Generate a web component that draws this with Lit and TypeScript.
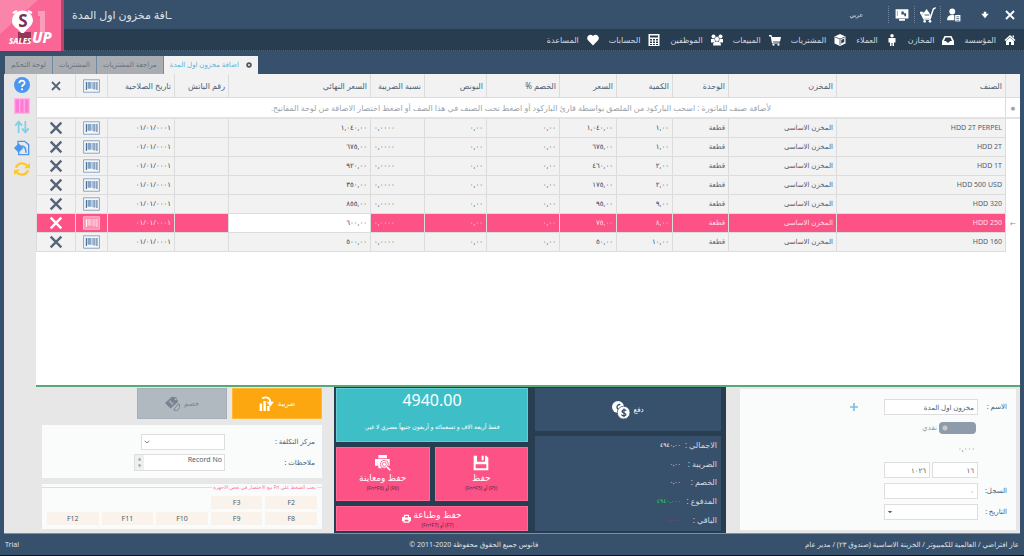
import { LitElement, html, css, svg } from "lit";
import { customElement } from "lit/decorators.js";
import { classMap } from "lit/directives/class-map.js";

const ICONS: Record<string, unknown> = {
  close: svg`<path d="M4 4L20 20M20 4L4 20" fill="none" stroke="currentColor" stroke-width="3.600"/>`,
  down: svg`<path d="M9 4h6v5h6l-9 11L3 9h6z"/>`,
  user: svg`<circle cx="9" cy="6" r="5"/><path d="M0 21c0-6 3-9 9-9 2 0 4 .4 5 1v8z"/><path d="M12.500 11h11v13h-11z" fill="#37506b"/><path d="M14 12h9v11h-9z"/><path d="M16 15h5M16 18h5M16 21h5" stroke="#37506b" stroke-width="1.200"/>`,
  basket: svg`<path d="M23.500 1L20 3l-5 15H6L1 8" fill="none" stroke="currentColor" stroke-width="2.200"/><path d="M3 12l7-9 6 9-1 5H6zM0 7h5v3H0z"/><path d="M7 12h7" stroke="#37506b" stroke-width="1.400"/><circle cx="7" cy="21.500" r="2"/><circle cx="15" cy="21.500" r="2"/>`,
  screen: svg`<path d="M1 2h22v16H1zM7 19h10v3H7z"/><path d="M11 6h4v3h4v5h-3v-3h-5z" fill="#37506b"/><path d="M4 5v9" stroke="#8fa0b2" stroke-width="1.500"/>`,
  home: svg`<path d="M12 2l11 10-2 2-9-8-9 8-2-2zM17 3h3v5l-3-3zM4 14l8-7 8 7v8h-6v-6h-4v6H4z"/>`,
  tray: svg`<path fill-rule="evenodd" d="M5 4h14l5 10v8H0v-8zM7 7l-3 7h4l2 3h4l2-3h4l-3-7z"/>`,
  man: svg`<circle cx="12" cy="3.500" r="3.500"/><path d="M5 8h14v9h-3v7h-3v-6h-2v6H8v-7H5z"/>`,
  cube: svg`<path d="M12 0l11 5v14l-11 5-11-5V5z"/><path d="M2 6l10 4 10-4M12 10v12" fill="none" stroke="#293d50" stroke-width="1.500"/><path d="M14.500 12l6-3v7l-6 3z" fill="#293d50"/>`,
  cart: svg`<path d="M0 2h5l1 4h18l-2 9H8l.5 2H21v2H6L3.500 5H0z"/><circle cx="9" cy="21.500" r="2.200"/><circle cx="19" cy="21.500" r="2.200"/>`,
  group: svg`<circle cx="5" cy="5" r="4"/><circle cx="19" cy="5" r="4"/><path d="M0 10h8v7H0zM16 10h8v7h-8z"/><circle cx="12" cy="10" r="5" stroke="#293d50"/><path d="M4 23c0-6 3-8 8-8s8 2 8 8z"/>`,
  calc: svg`<path d="M1 0h22v24H1z"/><path d="M4 3h16v4H4zM4 10h4v3H4zm6 0h4v3h-4zm6 0h4v3h-4zM4 15h4v3H4zm6 0h4v3h-4zm6 0h4v3h-4zM4 20h4v2H4zm6 0h4v2h-4zm6 0h4v2h-4z" fill="#293d50"/>`,
  heart: svg`<path d="M12 23L1.500 12C-3 4 7-2 12 4c5-6 15 0 10.500 8z"/>`,
  help: svg`<circle cx="12" cy="12" r="12"/><path d="M8 9.500c0-5.500 8-5.500 8-.5 0 3-4 2.500-4 6" fill="none" stroke="#fff" stroke-width="2.600"/><circle cx="12" cy="18.500" r="1.600" fill="#fff"/>`,
  columns: svg`<path d="M0 0h24v24H0z" fill="#ffb3e6"/><path d="M2 2h20v20H2z"/><path d="M8.700 2v20M15.300 2v20" stroke="#ffc4ec" stroke-width="1.400"/>`,
  sort: svg`<path d="M7 21V5M2 10l5-6 5 6M17 3v16M12 14l5 6 5-6" fill="none" stroke="currentColor" stroke-width="2.600"/>`,
  doc: svg`<path d="M6 7V2h10l6 5v15H7v-4" fill="none" stroke="currentColor" stroke-width="2"/><path d="M7 5l7 7-7 7-7-7z"/><path d="M11 9c5 0 7 3 7 10" fill="none" stroke="currentColor" stroke-width="2.400"/>`,
  refresh: svg`<path d="M3 10c2-7 12-9 17-3M21 14c-2 7-12 9-17 3" fill="none" stroke="currentColor" stroke-width="3.400"/><path d="M24 3v8h-9zM0 21v-8h9z"/>`,
  barcode: svg`<path d="M1 1h28v22H1z" fill="#fff" fill-opacity=".35" stroke="currentColor" stroke-width="1.700"/><path d="M5 5h2v14H5z" class="bar"/><path d="M8 5h6v12H8zM15 5h2v12h-2zM18 5h4v13h-4zM23 5h3v14h-3z"/>`,
  tax: svg`<path d="M1 12h4v12H1zM7 8h4v16H7zM13 16h4v8h-4z"/><path d="M5 4c7-4 13-1 13 6" fill="none" stroke="currentColor" stroke-width="3"/><path d="M12 9h12l-6 8z"/>`,
  tags: svg`<path d="M0 11L11 1l7 1 3 7L9 20z"/><path d="M14 22L22 12l2 6-5 6z" fill="none" stroke="currentColor" stroke-width="1.500"/><circle cx="17" cy="5" r="1.600" fill="#b0b8c0"/><path d="M6 10c3-3 4 5 8 1M8 7l4 8" fill="none" stroke="#b0b8c0" stroke-width="1.500"/>`,
  coins: svg`<circle cx="8" cy="8" r="8"/><path d="M11 5c-5-2-6 7-1 6" fill="none" stroke="#37506b" stroke-width="1.800"/><circle cx="15.500" cy="15.500" r="8.500" stroke="#37506b"/><path d="M19 13c-1-2-6-1.500-5.500 1s5 1.500 5 4-5 2-6 0M16 10v11.500" fill="none" stroke="#37506b" stroke-width="1.700"/>`,
  save: svg`<path fill-rule="evenodd" d="M1 1h19l3 3v19H1zM4 14v6h16v-6zM6 1v9h12V1z"/><path d="M13 1h3v7h-3z"/>`,
  preview: svg`<path d="M5 0h13v5H5zM0 6h22v10h-4V9H4v7H0zM5 11h6v9H5z"/><path d="M4 6h15v10H4z"/><circle cx="14" cy="14" r="6" stroke="#fc5286" stroke-width="1.300"/><circle cx="14" cy="14" r="3" fill="none" stroke="#fc5286" stroke-width="1.200"/><path d="M18 18l5 5" stroke="currentColor" stroke-width="2.500"/>`,
  printer: svg`<path fill-rule="evenodd" d="M5 2h14v6h5v11h-4v4H4v-4H0V8h5zM8 5v4h8V5zM7 15v5h10v-5z"/>`,
  plus: svg`<path d="M9.500 0h5v9.500H24v5h-9.500V24h-5v-9.500H0v-5h9.500z"/>`,
  gear: svg`<circle cx="12" cy="12" r="11"/><circle cx="12" cy="12" r="4" fill="#f2f2f2"/>`,
  chevron: svg`<path d="M3 7l9 9 9-9" fill="none" stroke="currentColor" stroke-width="3"/>`,
  caret: svg`<path d="M3 8h18l-9 9z"/>`,
};

const BOXES: Record<string, string> = { barcode: "0 0 30 24" };

const icon = (name: string) =>
  html`<svg class="icon i-${name}" viewBox=${BOXES[name] ?? "0 0 24 24"} aria-hidden="true">${ICONS[name]}</svg>`;

const NAV = [
  ["home", "المؤسسة"], ["tray", "المخازن"], ["man", "العملاء"], ["cube", "المشتريات"], ["cart", "المبيعات"],
  ["group", "الموظفين"], ["calc", "الحسابات"], ["heart", "المساعدة"],
];

const WIDTHS = [15, 169, 108, 56, 56, 57, 73, 62, 54, 142, 54, 67, 32, 39];
const HEADS = ["الصنف", "المخزن", "الوحدة", "الكمية", "السعر", "الخصم %", "البونص", "نسبة الضريبة", "السعر النهائي", "رقم الباتش", "تاريخ الصلاحية"];

const ROWS = [
  ["HDD 2T PERPEL", "١,٠٠", "١,٠٤٠,٠٠", "١,٠٤٠,٠٠"],
  ["HDD 2T", "١,٠٠", "٦٧٥,٠٠", "٦٧٥,٠٠"],
  ["HDD 1T", "٢,٠٠", "٤٦٠,٠٠", "٩٢٠,٠٠"],
  ["HDD 500 USD", "٢,٠٠", "١٧٥,٠٠", "٣٥٠,٠٠"],
  ["HDD 320", "٩,٠٠", "٩٥,٠٠", "٨٥٥,٠٠"],
  ["HDD 250", "٨,٠٠", "٧٥,٠٠", "٦٠٠,٠٠"],
  ["HDD 160", "١٠,٠٠", "٥٠,٠٠", "٥٠٠,٠٠"],
];
const SELECTED = 5;

const TOTALS = [
  ["الاجمالي :", "٤٩٤٠,٠٠", ""], ["الضريبة :", "٠,٠٠", ""], ["الخصم :", "٠,٠٠", ""],
  ["المدفوع :", "٤٩٤٠,٠٠٠", "paid"], ["الباقي :", "٠,٠٠٠", "rest"],
];

@customElement("app-root")
export class AppRoot extends LitElement {
  static styles = css`
    :host { display: flex; flex-direction: column; min-height: 100vh; box-sizing: border-box; direction: rtl; background: #37506b; color: #4d5f73; font: 7px/10px "Noto Sans", "DejaVu Sans", sans-serif; border-bottom: 1px solid #10161d; }
    * { box-sizing: border-box; }
    button, input, select, textarea { font: inherit; color: inherit; border: 0; border-radius: 0; margin: 0; padding: 0; background: none; }
    a { color: inherit; text-decoration: none; }
    .icon { display: block; width: 12px; height: 12px; fill: currentColor; flex: none; }
    .top { display: flex; height: 51px; color: #fff; }
    .bars { flex: 1; min-width: 0; display: flex; flex-direction: column; }
    .logo { width: 64px; height: 51px; flex: none; display: block; }
    .title { height: 29px; display: flex; align-items: center; padding: 0 8px; }
    .title h1 { margin: 0; margin-inline-start: auto; font-size: 11px; line-height: 16px; font-weight: 400; color: #dfe5ea; }
    .tool { height: 17px; display: flex; align-items: center; justify-content: center; width: 26px; }
    .tool.end { width: 12px; }
    .tool.mini { width: 38px; }
    .tool.line { border-inline-end: 1px dotted #75869a; }
    .tool .icon { width: 14px; height: 14px; }
    .tool .i-basket { width: 16px; height: 16px; }
    .tool .i-close { width: 12px; height: 12px; }
    .tool .i-down { width: 10px; height: 10px; }
    .lang { margin-inline-start: 25px; font-size: 6px; color: #dfe5ea; }
    .nav { flex: 1; background: #293d50; border-bottom: 1px dotted #4a6076; display: flex; align-items: center; padding: 0 8px; gap: 10px; font-size: 8px; }
    .nav a { display: flex; align-items: center; gap: 8px; white-space: nowrap; color: #d3dae0; }
    .nav .icon { color: #fff; }
    .tabs { display: flex; direction: ltr; align-items: flex-end; padding: 5px 5px 0; }
    .tab { height: 18px; padding: 0 6px; background: #a9adb1; color: #64727f; border-inline-end: 1px solid #718aa4; display: flex; align-items: center; justify-content: center; white-space: nowrap; }
    .tab.on { background: #f2f2f2; color: #59b4d8; gap: 7px; border: 0; }
    .tab .icon { width: 6px; height: 6px; color: #4d5661; }
    .main { flex: 1; display: flex; direction: ltr; margin: 0 4px; background: #e7e7e7; min-height: 0; border-bottom: 1px solid #8a8d90; }
    .side { width: 32px; flex: none; display: flex; flex-direction: column; align-items: center; gap: 5px; padding: 3px 0 0 3px; }
    .side button { display: block; }
    .side .icon { width: 16px; height: 16px; }
    .blue { color: #4a96f0; } .pink { color: #ff7ad5; } .sky { color: #7fd0e5; } .gold { color: #fbc92b; }
    .wrap { flex: 1; min-width: 0; display: flex; flex-direction: column; }
    .sheet { flex: 1; background: #fff; direction: rtl; border-bottom: 2px solid #5aa877; }
    table { width: 100%; table-layout: fixed; border-collapse: separate; border-spacing: 0; }
    th, td { height: 19px; padding: 0 3px; border-left: 1px solid #dcdcdc; border-bottom: 1px solid #dcdcdc; background: #f2f2f2; font-weight: 400; text-align: right; white-space: nowrap; overflow: hidden; }
    th { height: 24px; font-size: 8px; }
    .hint td { height: 21px; background: #fff; text-align: center; color: #9ba4ac; border-bottom: 2px solid #e3e3e3; font-size: 8px; }
    .num { color: #33475c; }
    .left { text-align: left; }
    .mark { background: #fff; padding: 0; text-align: center; border-bottom: 0; }
    .hint .mark { font-size: 5px; }
    .mid { text-align: center; }
    .mid .icon { margin: 0 auto; }
    .mid button { display: inline-block; vertical-align: middle; }
    .mid .i-close { width: 16px; height: 16px; color: #56657a; }
    .mid .i-barcode { width: 17px; height: 14px; color: #87a3c4; }
    .bar { fill: #3f6f9c; }
    th.mid .i-close { width: 12px; height: 12px; }
    .sel td { background: #fc5286; color: #ffe0ea; }
    .sel td.mark { background: #fff; color: #fc5286; }
    .sel .mid .i-close { color: #fff; }
    .sel .mid .i-barcode { color: #ffc1d3; }
    .sel .bar { fill: #fff; }
    .sel td.edit { background: #fff; color: #33475c; }
    .deck { display: grid; grid-template-columns: minmax(0, 298fr) minmax(0, 392fr) minmax(0, 294fr); height: 146px; direction: ltr; }
    .extras { padding: 1px 12px 4px 6px; display: flex; flex-direction: column; gap: 6px; }
    .duo { display: flex; justify-content: flex-end; gap: 5px; direction: ltr; }
    .big { width: 90px; height: 31px; display: flex; direction: rtl; align-items: center; justify-content: center; gap: 4px; background: #fca70f; color: #fff; border: 1px solid #ffb938; }
    .big .icon { width: 15px; height: 15px; }
    .big.off { background: #b0b8c0; border-color: #a6afb8; color: #77838f; }
    .card { background: #fafcfb; direction: rtl; }
    .notes { height: 53px; padding: 9px 7px; display: grid; grid-template-columns: 90px 84px; gap: 4px 0; align-items: center; }
    .box { background: #fff; border: 1px solid #dedede; height: 16px; padding: 0 3px; width: 100%; min-width: 0; }
    .pick { position: relative; display: block; }
    .pick .box { appearance: none; display: block; }
    .pick .icon { position: absolute; left: 3px; top: 5px; width: 6px; height: 6px; }
    .memo { display: flex; direction: ltr; width: 91px; height: 17px; border: 1px solid #dedede; background: #fff; }
    .spin { width: 9px; background: #efefef; color: #9a9a9a; font-size: 4px; line-height: 7px; text-align: center; }
    .memo textarea { flex: 1; min-width: 0; resize: none; overflow: hidden; text-align: right; direction: ltr; padding: 0 2px; }
    .fn { flex: 1; min-height: 0; }
    fieldset { margin: 0; border: 0; border-top: 1px solid #dedede; min-width: 0; padding: 6px 5px 0; }
    legend { font-size: 5px; line-height: 6px; color: #fb76a0; padding: 0 1px; }
    .keys { display: grid; direction: rtl; grid-template-columns: repeat(5, 1fr); gap: 3px; }
    .keys button { background: #f9f3ec; height: 13px; line-height: 13px; }
    .gap { grid-column: span 3; }
    .pay { background: #293d50; padding: 1px 5px 2px 2px; display: grid; grid-template-columns: 192px 1fr; gap: 7px; direction: ltr; color: #fff; }
    .stack { display: flex; flex-direction: column; gap: 5px; }
    .total { background: #3ebfc8; border: 1px solid #66cbd2; height: 54px; text-align: center; direction: rtl; }
    .total output { display: block; font-size: 16px; line-height: 22px; }
    .total p { margin: 11px 0 0; font-size: 6px; }
    .row { display: flex; gap: 5px; height: 54px; direction: ltr; }
    .act { flex: 1; background: #fc5286; border: 1px solid #fd6b97; display: flex; flex-direction: column; align-items: center; justify-content: center; direction: rtl; font-size: 9px; line-height: 13px; }
    .act small { display: block; font-size: 5px; line-height: 9px; color: #5c2a43; }
    .act .icon { width: 16px; height: 16px; }
    .act.wide { flex: none; height: 25px; flex-direction: row; gap: 2px; }
    .act.wide .icon { width: 9px; height: 9px; }
    .cash { height: 43px; background: #37506b; display: flex; direction: rtl; align-items: center; justify-content: center; gap: 3px; }
    .cash .icon { width: 18px; height: 18px; }
    .sum { flex: 1; margin: 0; background: #37506b; direction: rtl; padding: 0 4px 2px; display: grid; grid-template-columns: 36px auto; align-content: space-around; font-size: 8px; line-height: 12px; justify-content: start; }
    dt, dd { margin: 0; white-space: nowrap; }
    dt { color: #d3dae0; }
    dd { font-size: 6px; }
    .paid { color: #2fd058; } .rest { color: #f0324a; }
    .info { padding: 2px 4px 3px 14px; display: flex; }
    .form { flex: 1; padding: 10px 9px 8px; display: grid; grid-template-columns: 29px 94px auto; grid-auto-rows: 16px; gap: 5px 0; align-items: center; justify-content: start; align-content: start; }
    .form label[for] { grid-column: 1; }
    .form .i-plus { width: 8px; height: 8px; color: #7bbfdd; margin-inline-start: 26px; }
    .form .switch { display: flex; align-items: center; gap: 2px; grid-column: 2; color: #8a97a4; padding-inline-start: 2px; }
    .switch input { appearance: none; width: 37px; height: 12px; border-radius: 4px; background: radial-gradient(circle at 6px 6px, #c8c8c8 2px, #8d9baa 3px); }
    .c2 { grid-column: 2; padding: 0 3px; }
    .pair { display: flex; gap: 2px; grid-column: 2; }
    .foot { height: 21px; color: #dfe5ea; padding: 0 5px; display: grid; grid-template-columns: 478fr auto 402fr; align-items: center; white-space: nowrap; }
    .foot span:last-child { text-align: left; }
  `;

  private row(r: string[], i: number) {
    return html`<tr class=${classMap({ sel: i === SELECTED })}>
      <td class="mark">${i === SELECTED ? "←" : ""}</td>
      <td dir="ltr">${r[0]}</td><td>المخزن الاساسى</td><td>قطعة</td>
      <td class="num">${r[1]}</td><td class="num">${r[2]}</td><td class="num">٠,٠٠</td><td class="num">٠,٠٠</td>
      <td class="num left">٠,٠٠٠٠</td><td class="num edit">${r[3]}</td><td></td><td class="num">٠١/٠١/٠٠٠١</td>
      <td class="mid"><button aria-label="باركود">${icon("barcode")}</button></td>
      <td class="mid"><button aria-label="حذف">${icon("close")}</button></td>
    </tr>`;
  }

  render() {
    return html`
      <header class="top">
        <div class="bars">
          <div class="title">
            <button class="tool end" aria-label="إغلاق">${icon("close")}</button>
            <button class="tool mini" aria-label="تصغير">${icon("down")}</button>
            <button class="tool line" aria-label="المستخدم">${icon("user")}</button>
            <button class="tool line" aria-label="السلة">${icon("basket")}</button>
            <button class="tool line" aria-label="الشاشة">${icon("screen")}</button>
            <a class="lang" href="#">عربي</a>
            <h1>ـافة مخزون اول المدة</h1>
          </div>
          <nav class="nav">${NAV.map(([n, t]) => html`<a href="#">${icon(n)}<span>${t}</span></a>`)}</nav>
        </div>
        <svg class="logo" viewBox="0 0 64 51" role="img" aria-label="Sales Up">
          <path d="M0 0h64v51H0z" fill="#fa6797"/><path d="M0 0h38L0 34z" fill="#fb84aa"/><path d="M61 0h3v51h-3z" fill="#b3456f"/>
          <path d="M38 11h7v22h-5V16h-2z" fill="#fb9dba"/><path d="M18 32h13v11H18z" fill="#9c3359"/>
          <path d="M12 21a10.500 10 0 0 1 21-1c0 6-6 8-9 13h-3c-3-5-9-6-9-12z" fill="#fff"/><path d="M13 13l4-2M32 13l-4-2" stroke="#fff" stroke-width="2"/>
          <text x="23" y="27" text-anchor="middle" font-size="17" font-weight="700" fill="#7d2f54" font-family="Noto Sans">S</text>
          <text x="9" y="44" font-size="8" font-weight="800" font-style="italic" fill="#fff" direction="ltr" font-family="Noto Sans">SALES</text>
          <text x="32" y="43" font-size="15" font-weight="800" font-style="italic" fill="#fff" direction="ltr" font-family="Noto Sans">UP</text>
        </svg>
      </header>
      <div class="tabs">
        <button class="tab">لوحة التحكم</button><button class="tab">المشتريات</button>
        <button class="tab">مراجعة المشتريات</button><button class="tab on">اضافة مخزون اول المدة ${icon("gear")}</button>
      </div>
      <main class="main">
        <div class="side">
          <button class="blue" aria-label="مساعدة">${icon("help")}</button><button class="pink" aria-label="الأعمدة">${icon("columns")}</button>
          <button class="sky" aria-label="ترتيب">${icon("sort")}</button><button class="blue" aria-label="استيراد">${icon("doc")}</button>
          <button class="gold" aria-label="تحديث">${icon("refresh")}</button>
        </div>
        <div class="wrap">
          <div class="sheet"><table>
            <colgroup>${WIDTHS.map((w) => html`<col style="width:${w}px">`)}</colgroup>
            <thead><tr><th></th>${HEADS.map((h) => html`<th>${h}</th>`)}<th class="mid">${icon("barcode")}</th><th class="mid">${icon("close")}</th></tr></thead>
            <tbody>
              <tr class="hint"><td class="mark">●</td><td colspan="13">لأضافة صنف للفاتورة : اسحب الباركود من الملصق بواسطة قارئ الباركود أو اضغط تحت الصنف في هذا الصف أو اضغط اختصار الاضافة من لوحة المفاتيح.</td></tr>
              ${ROWS.map((r, i) => this.row(r, i))}
            </tbody>
          </table></div>
          <div class="deck">
            <section class="extras">
              <div class="duo"><button class="big off">خصم ${icon("tags")}</button><button class="big">ضريبة ${icon("tax")}</button></div>
              <div class="card notes">
                <label for="cost">مركز التكلفة :</label><span class="pick"><select id="cost" class="box"></select>${icon("chevron")}</span>
                <label for="memo">ملاحظات :</label><div class="memo"><span class="spin">▲<br>▼</span><textarea id="memo" .value=${"Record No"}></textarea></div>
              </div>
              <div class="card fn"><fieldset><legend>يجب الضغط علي Fn مع الاختصار في بعض الاجهزة</legend>
                <div class="keys"><button>F2</button><button>F3</button><span class="gap"></span>
                ${["F8", "F9", "F10", "F11", "F12"].map((k) => html`<button>${k}</button>`)}</div>
              </fieldset></div>
            </section>
            <section class="pay">
              <div class="stack">
                <div class="total"><output>4940.00</output><p>فقط أربعة الاف و تسعمائة و أربعون جنيهاً مصري لا غير.</p></div>
                <div class="row">
                  <button class="act">${icon("preview")}حفظ ومعاينة<small>(F6) أو (Fn+F6)</small></button>
                  <button class="act">${icon("save")}حفظ<small>(F5) أو (Fn+F5)</small></button>
                </div>
                <button class="act wide"><span>حفظ وطباعة<small>(F7) أو (Fn+F7)</small></span>${icon("printer")}</button>
              </div>
              <div class="stack">
                <button class="cash">دفع ${icon("coins")}</button>
                <dl class="sum">${TOTALS.map(([k, v, c]) => html`<dt>${k}</dt><dd class=${c}>${v}</dd>`)}</dl>
              </div>
            </section>
            <section class="info"><div class="card form">
              <label for="name">الاسم :</label><input id="name" class="box" .value=${"مخزون اول المدة"}><button aria-label="إضافة">${icon("plus")}</button>
              <label class="switch"><input type="checkbox">نقدي</label>
              <output class="c2">٠,٠٠٠</output>
              <div class="pair"><input class="box" aria-label="رقم" .value=${"١٦"}><input class="box" aria-label="رقم الفاتورة" .value=${"١٠٢٦"}></div>
              <label for="reg">السجل:</label><input id="reg" class="box" .value=${"٠"}>
              <label for="date">التاريخ :</label><span class="pick"><select id="date" class="box"></select>${icon("caret")}</span>
            </div></section>
          </div>
        </div>
      </main>
      <footer class="foot"><span>عاز افتراضي / العالمية للكمبيوتر / الخزينة الاساسية (صندوق ٢٣) / مدير عام</span><span>فانوس جميع الحقوق محفوظة 2020-2011 ©</span><span>Trial</span></footer>
    `;
  }
}
